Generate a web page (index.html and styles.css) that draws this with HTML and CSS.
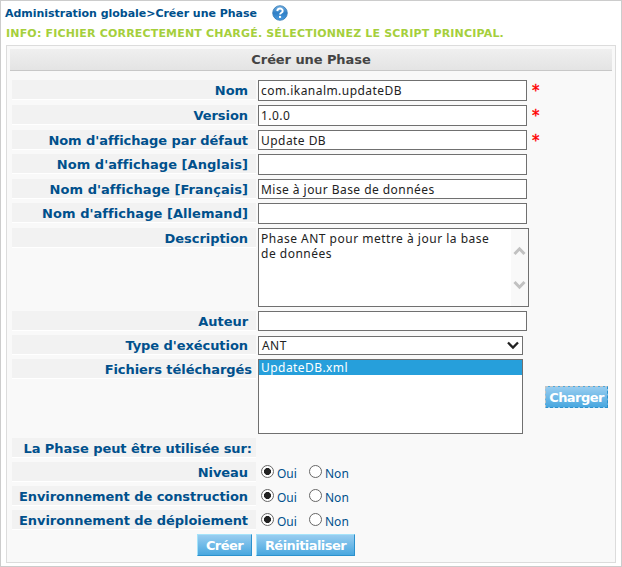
FILE: index.html
```html
<!DOCTYPE html>
<html lang="fr">
<head>
<meta charset="utf-8">
<title>Créer une Phase</title>
<link rel="stylesheet" href="styles.css">
</head>
<body>
<div class="page">
  <div class="crumbs"><span class="crumb-text">Administration globale&gt;Créer une Phase</span>
    <svg class="help" width="16" height="16" viewBox="0 0 16 16"><defs><linearGradient id="g" x1="0" y1="0" x2="0" y2="1"><stop offset="0" stop-color="#75b1e2"/><stop offset=".5" stop-color="#2f7fc6"/><stop offset="1" stop-color="#4a9be0"/></linearGradient></defs><circle cx="8" cy="8" r="7.3" fill="url(#g)" stroke="#3478b4" stroke-width=".8"/><path d="M5.3 6.1C5.4 2.7 10.7 2.8 10.7 5.9C10.7 7.8 8.1 7.8 8.1 9.6" fill="none" stroke="#fff" stroke-width="1.9"/><rect x="7" y="10.9" width="2.1" height="2" fill="#fff"/></svg>
  </div>
  <div class="info"><span>INFO: FICHIER CORRECTEMENT CHARGÉ. SÉLECTIONNEZ LE SCRIPT PRINCIPAL.</span></div>
  <div class="panel">
    <h1 class="title">Créer une Phase</h1>
    <div class="form">
      <div class="row h25"><div class="label"><span>Nom</span></div><div class="field f21">com.ikanalm.updateDB</div><span class="req">*</span></div>
      <div class="row h25"><div class="label"><span>Version</span></div><div class="field f21">1.0.0</div><span class="req">*</span></div>
      <div class="row h24"><div class="label"><span>Nom d'affichage par défaut</span></div><div class="field f20">Update DB</div><span class="req">*</span></div>
      <div class="row h25"><div class="label lang"><span>Nom d'affichage [Anglais]</span></div><div class="field f21"></div></div>
      <div class="row h24"><div class="label lang"><span>Nom d'affichage [Français]</span></div><div class="field f20">Mise à jour Base de données</div></div>
      <div class="row h25"><div class="label lang"><span>Nom d'affichage [Allemand]</span></div><div class="field f21"></div></div>
      <div class="row h83"><div class="label"><span>Description</span></div>
        <div class="area"><div class="area-text">Phase ANT pour mettre à jour la base de données</div>
          <div class="scroll"><svg width="13" height="10" viewBox="0 0 13 10"><path d="M1.5 8L6.5 2.8L11.5 8" fill="none" stroke="#c1c1c1" stroke-width="3"/></svg><svg width="13" height="10" viewBox="0 0 13 10"><path d="M1.5 2L6.5 7.2L11.5 2" fill="none" stroke="#c1c1c1" stroke-width="3"/></svg></div>
        </div></div>
      <div class="row h24"><div class="label"><span>Auteur</span></div><div class="field f20"></div></div>
      <div class="row h24"><div class="label"><span>Type d'exécution</span></div><div class="field select">ANT<svg width="12" height="9" viewBox="0 0 12 9"><path d="M1 1.5L6 6.5L11 1.5" fill="none" stroke="#222" stroke-width="2.3"/></svg></div></div>
      <div class="row h79"><div class="label tight"><span>Fichiers téléchargés</span></div><div class="list"><div class="option">UpdateDB.xml</div></div><div class="button load">Charger</div></div>
      <div class="row h24"><div class="label tight"><span>La Phase peut être utilisée sur:</span></div></div>
      <div class="row h24"><div class="label"><span>Niveau</span></div><div class="radios"><i class="radio on"></i><span class="oui">Oui</span><i class="radio"></i><span>Non</span></div></div>
      <div class="row h24"><div class="label"><span>Environnement de construction</span></div><div class="radios"><i class="radio on"></i><span class="oui">Oui</span><i class="radio"></i><span>Non</span></div></div>
      <div class="row h24"><div class="label"><span>Environnement de déploiement</span></div><div class="radios"><i class="radio on"></i><span class="oui">Oui</span><i class="radio"></i><span>Non</span></div></div>
      <div class="actions"><div class="button create">Créer</div><div class="button reset">Réinitialiser</div></div>
    </div>
  </div>
</div>
</body>
</html>
```

FILE: styles.css
```css
* { box-sizing: border-box; }
body { margin: 0; background: #fff; font-family: "DejaVu Sans", Verdana, sans-serif; color: #00508c; }
.page { width: 622px; height: 567px; border: 1px solid #ccc; padding: 0 5px; white-space: nowrap; }
.crumbs { display: flex; height: 24px; padding-top: 4px; font-weight: bold; font-size: 11px; line-height: 17px; }
.crumb-text { width: 266px; margin-left: -1px; letter-spacing: -.03px; }
.help { flex: none; margin-left: 1px; }
.info { height: 20px; color: #a5cf3c; font-weight: bold; font-size: 11px; line-height: 17px; letter-spacing: .18px; }
.panel { width: 610px; height: 518px; border: 1px solid #dcdcdc; background: #f9f9f9; padding: 3px 3px 0; }
.title { width: 602px; height: 22px; margin: 0; border-bottom: 1px solid #c8c8c8; background: linear-gradient(#efefef, #e4e4e4); color: #444; font-size: 13px; line-height: 22px; text-align: center; letter-spacing: -.08px; }
.form { padding: 9px 0 0 2px; }
.row { display: flex; align-items: flex-start; }
.h24 { height: 24px; }
.h25 { height: 25px; }
.h79 { height: 79px; }
.h83 { height: 83px; }
.label { width: 244px; height: 20px; margin-right: 2px; padding-right: 8px; background: #f2f2f2; border-bottom: 1px solid #fff; text-align: right; font-weight: bold; font-size: 13px; line-height: 21px; letter-spacing: -.06px; }
.lang { letter-spacing: .05px; }
.tight { padding-right: 4px; }
.field, .area, .list { border: 1px solid #707070; background: #fff; color: #222; font-family: "Noto Sans", sans-serif; font-size: 12px; letter-spacing: .45px; }
.field { width: 269px; padding-left: 2px; line-height: 19px; }
.f20 { height: 20px; }
.f21 { height: 21px; }
.req { margin-left: 5px; color: #f00; font-size: 15px; line-height: 23px; -webkit-text-stroke: .4px #f00; }
.area { display: flex; justify-content: space-between; width: 271px; height: 79px; }
.area-text { width: 245px; padding: 2px 0 0 2px; line-height: 15px; letter-spacing: .5px; white-space: normal; }
.scroll { display: flex; flex-direction: column; gap: 24px; width: 17px; padding: 17px 2px 0; background: #f9f9f9; }
.select { display: flex; justify-content: space-between; width: 265px; height: 19px; margin-top: 1px; padding: 0 3px; line-height: 17px; }
.select svg { margin-top: 4px; }
.list { width: 265px; height: 75px; }
.option { height: 15px; padding-left: 2px; background: #269fdb; color: #fff; line-height: 15px; }
.radios { display: flex; padding: 3px 0 0 3px; font-family: "Noto Sans", sans-serif; font-size: 12px; line-height: 17px; }
.radio { width: 13px; height: 13px; margin-right: 3px; border: 1px solid #666; border-radius: 50%; background: #fff; }
.on { background: radial-gradient(circle, #222 0 3.2px, #fff 3.8px); }
.oui { width: 32px; }
.actions { display: flex; gap: 4px; padding-left: 185px; }
.button { height: 22px; border: 1px solid; border-color: #a5e3fa #2b91cd #2b91cd #a5e3fa; background: linear-gradient(#98cdf0, #49a7df); color: #fff; font-weight: bold; font-size: 13px; line-height: 21px; text-align: center; letter-spacing: -.55px; }
.create { width: 55px; }
.reset { width: 99px; }
.load { width: 63px; margin: 27px 0 0 22px; border: 1px dashed; border-color: #c5c5c5 #2b91cd #2b91cd #c5c5c5; }
```
